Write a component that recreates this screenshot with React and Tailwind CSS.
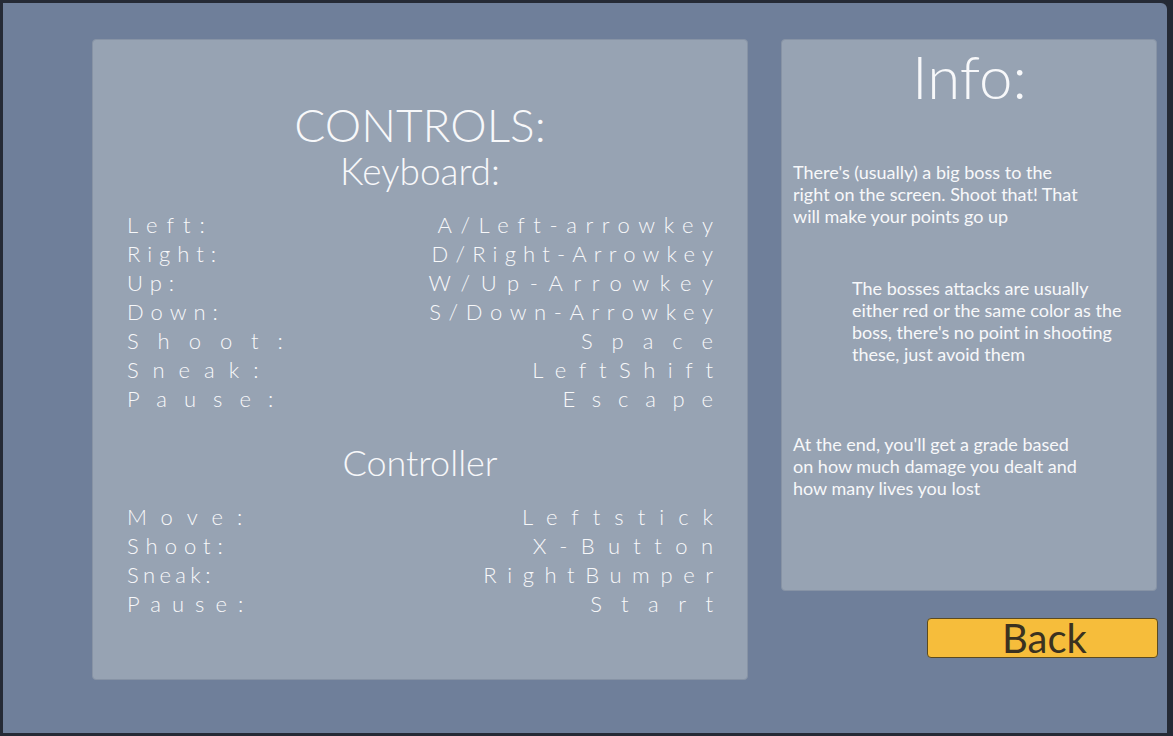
import React from 'react';

// tracking values are tuned so each text spans the same width as in the game menu
const keyboard = [
  { label: 'Left:', lt: 'tracking-[9px]', value: 'A/Left-arrowkey', vt: 'tracking-[8.6px] -mr-[8.6px]' },
  { label: 'Right:', lt: 'tracking-[7px]', value: 'D/Right-Arrowkey', vt: 'tracking-[7.2px] -mr-[7.2px]' },
  { label: 'Up:', lt: 'tracking-[7px]', value: 'W/Up-Arrowkey', vt: 'tracking-[10.6px] -mr-[10.6px]' },
  { label: 'Down:', lt: 'tracking-[7px]', value: 'S/Down-Arrowkey', vt: 'tracking-[7.6px] -mr-[7.6px]' },
  { label: 'Shoot:', lt: 'tracking-[19px]', value: 'Space', vt: 'tracking-[19px] -mr-[19px]' },
  { label: 'Sneak:', lt: 'tracking-[14px]', value: 'LeftShift', vt: 'tracking-[12.6px] -mr-[12.6px]' },
  { label: 'Pause:', lt: 'tracking-[17px]', value: 'Escape', vt: 'tracking-[16.8px] -mr-[16.8px]' },
];

const controller = [
  { label: 'Move:', lt: 'tracking-[14px]', value: 'Leftstick', vt: 'tracking-[14px] -mr-[14px]' },
  { label: 'Shoot:', lt: 'tracking-[7px]', value: 'X-Button', vt: 'tracking-[13.4px] -mr-[13.4px]' },
  { label: 'Sneak:', lt: 'tracking-[4.4px]', value: 'RightBumper', vt: 'tracking-[10.6px] -mr-[10.6px]' },
  { label: 'Pause:', lt: 'tracking-[11px]', value: 'Start', vt: 'tracking-[19.5px] -mr-[19.5px]' },
];

function Row({ label, lt, value, vt }) {
  return (
    <div className="flex justify-between h-[29px] items-center text-[22px] leading-none font-light">
      <span className={lt}>{label}</span>
      <span className={vt}>{value}</span>
    </div>
  );
}

export default function App() {
  return (
    <div
      className="w-[1173px] h-[736px] bg-[#252a35] pt-[3px] pl-[3px] pr-[6px] pb-[3px]"
      style={{ fontFamily: 'Lato, "Open Sans", sans-serif' }}
    >
      <div className="w-full h-full bg-[#6f7f9a] rounded-tr-[6px] flex pl-[89px] pt-[36px] gap-[33px] text-[#f7f8fa]">
        {/* controls panel */}
        <div className="w-[656px] h-[641px] bg-[#97a3b3] rounded-[4px] border border-[#8793a5] px-[34px] pt-[62px]">
          <h1 className="text-center text-[46px] leading-none font-light">CONTROLS:</h1>
          <h2 className="text-center text-[37px] leading-none font-light mt-[4px]">Keyboard:</h2>
          <div className="mt-[21px]">
            {keyboard.map((r) => (
              <Row key={r.label} {...r} />
            ))}
          </div>
          <h2 className="text-center text-[36px] leading-none font-light mt-[31px]">Controller</h2>
          <div className="mt-[22px]">
            {controller.map((r) => (
              <Row key={r.label} {...r} />
            ))}
          </div>
        </div>

        {/* info + back */}
        <div className="flex flex-col items-end">
          <div className="w-[376px] h-[552px] bg-[#97a3b3] rounded-[4px] border border-[#8793a5] pl-[11px] pr-[10px] text-[18px] leading-[22px]">
            <h1 className="text-center text-[60px] leading-none font-light mt-[6px]">Info:</h1>
            <p className="mt-[55px] whitespace-nowrap">
              There's (usually) a big boss to the
              <br />
              right on the screen. Shoot that! That
              <br />
              will make your points go up
            </p>
            <p className="mt-[50px] ml-[59px] whitespace-nowrap">
              The bosses attacks are usually
              <br />
              either red or the same color as the
              <br />
              boss, there's no point in shooting
              <br />
              these, just avoid them
            </p>
            <p className="mt-[68px] whitespace-nowrap">
              At the end, you'll get a grade based
              <br />
              on how much damage you dealt and
              <br />
              how many lives you lost
            </p>
          </div>
          <button className="mt-[27px] -mr-[1px] w-[231px] h-[40px] bg-[#f6bd3b] border border-[#5b4a1f] rounded-[4px] text-[40px] leading-none text-[#3b3220] flex items-center justify-center pl-[4px]">
            Back
          </button>
        </div>
      </div>
    </div>
  );
}
